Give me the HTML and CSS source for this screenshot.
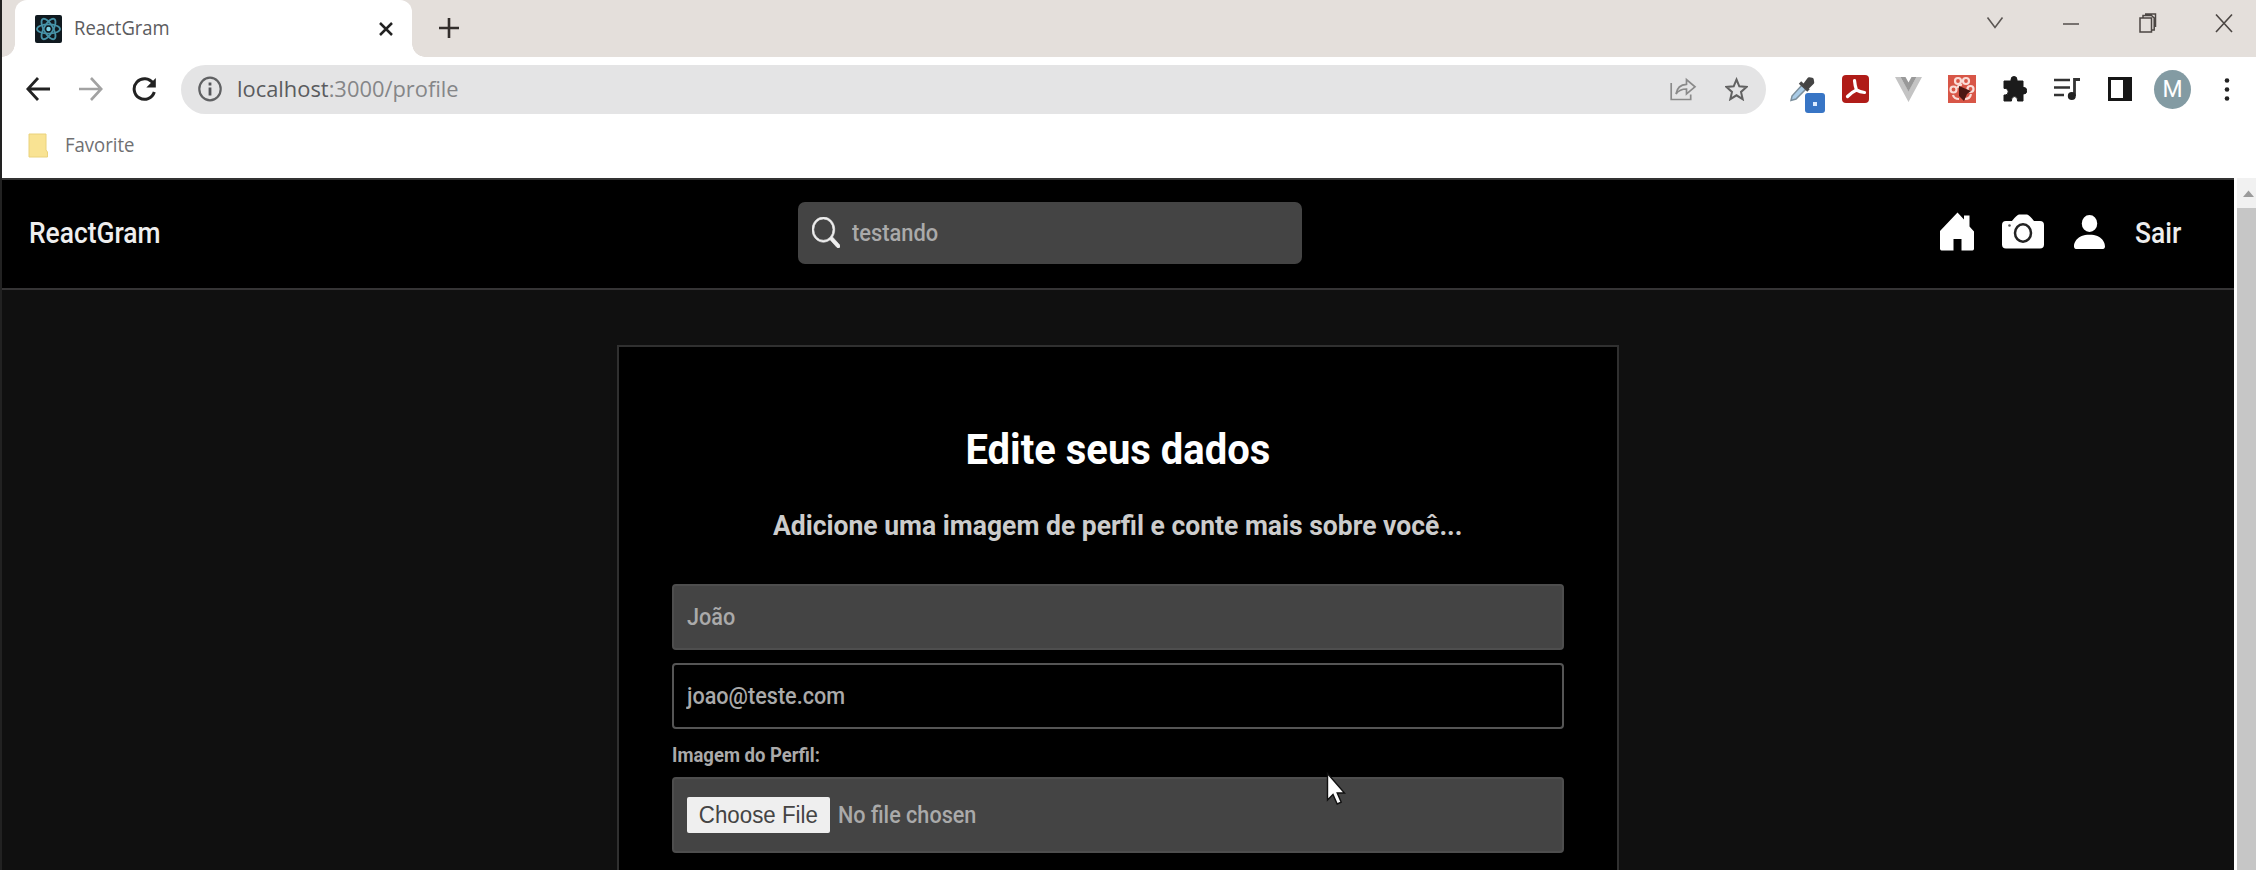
FILE: index.html
```html
<!DOCTYPE html>
<html lang="pt-BR">
<head>
<meta charset="utf-8">
<title>ReactGram</title>
<link rel="stylesheet" href="styles.css">
</head>
<body>
<div class="window">
  <div class="tabstrip">
    <div class="prev-tab"></div>
    <div class="tab">
      <svg class="favicon" width="27" height="28" viewBox="0 0 27 28"><rect width="27" height="28" rx="2" fill="#10191f"/><g fill="none" stroke="#4793a8" stroke-width="1.800"><ellipse cx="13.5" cy="14" rx="11.5" ry="4.6"/><ellipse cx="13.5" cy="14" rx="11.5" ry="4.6" transform="rotate(60 13.5 14)"/><ellipse cx="13.5" cy="14" rx="11.5" ry="4.6" transform="rotate(120 13.5 14)"/></g><circle cx="13.5" cy="14" r="2.2" fill="#7fd3e6"/></svg>
      <span class="tab-title">ReactGram</span>
      <svg class="tab-close" width="14" height="14" viewBox="0 0 14 14"><path d="M1 1l12 12M13 1L1 13" stroke="#222" stroke-width="2.5"/></svg>
    </div>
    <svg class="new-tab" width="20" height="20" viewBox="0 0 20 20"><path d="M10 0v20M0 10h20" stroke="#332e2c" stroke-width="2.6"/></svg>
    <div class="controls">
      <svg width="18" height="20" viewBox="0 0 18 20"><path d="M1.500 4.500l7.500 10 7.500-10" fill="none" stroke="#5b5653" stroke-width="1.6"/></svg>
      <svg width="18" height="20" viewBox="0 0 18 20"><path d="M1 11h16" stroke="#5b5653" stroke-width="1.6"/></svg>
      <svg width="18" height="20" viewBox="0 0 18 20"><path d="M1 5h11.500v14H1zM4 5V2.500h8.500l2.700 2.500v12h-2.700M6 1h10.500v13" fill="none" stroke="#4b4643" stroke-width="1.500"/></svg>
      <svg width="18" height="20" viewBox="0 0 18 20"><path d="M1 1.500l16 17.500M17 1.500L1 19" stroke="#4b4643" stroke-width="1.6"/></svg>
    </div>
  </div>

  <div class="toolbar">
    <div class="navbtns">
      <svg width="24" height="24" viewBox="0 0 24 24"><path d="M24 12H2M12 1L1.800 12 12 23" fill="none" stroke="#222" stroke-width="2.8"/></svg>
      <svg width="24" height="24" viewBox="0 0 24 24"><path d="M0 12h22M12 1l10.200 11L12 23" fill="none" stroke="#a2a2a2" stroke-width="2.6"/></svg>
      <svg width="24" height="24" viewBox="0 0 24 24"><path d="M21 6.200A10.300 10.300 0 1 0 22.300 15" fill="none" stroke="#222" stroke-width="3"/><path d="M23.800 1v9.500h-9.500z" fill="#222"/></svg>
    </div>
    <div class="omnibox">
      <svg width="24" height="26" viewBox="0 0 24 26"><ellipse cx="12" cy="13" rx="10.700" ry="11.400" fill="none" stroke="#606163" stroke-width="2.200"/><path d="M12 11.500v8M12 6.500v3" stroke="#55565a" stroke-width="2.800"/></svg>
      <span class="url">localhost<span class="path">:3000/profile</span></span>
      <div class="omni-actions">
        <svg width="27" height="24" viewBox="0 0 27 24"><path d="M1.200 6v16.500h19.500v-5M6 17C7 10.500 11 7.500 16.500 7.300V2.500l8.500 7.300-8.500 7.200v-5C11.500 12 8.500 13.500 6 17z" fill="none" stroke="#8a8a8a" stroke-width="1.700"/></svg>
        <svg width="23" height="24" viewBox="0 0 23 24"><path d="M11.500 2.500l2.800 6.800 7.200.6-5.500 5 1.700 7.300-6.200-3.900-6.200 3.900L7 14.900 1.500 9.900l7.200-.6z" fill="none" stroke="#626262" stroke-width="2"/></svg>
      </div>
    </div>
    <div class="extensions">
      <span class="picker">
        <svg width="27" height="28" viewBox="0 0 27 28"><path d="M2 25.500l1-4.500L13 10l4 4L7 24z" fill="#a9cbe6" stroke="#7c8f9c" stroke-width="1.500"/><path d="M11 7.500l8.500 8" stroke="#4a4a4a" stroke-width="3.500"/><path d="M15.500 10l4.500-6 3 .5.500 3-5 5z" fill="#444" stroke="#444" stroke-width="3.500" stroke-linejoin="round"/></svg>
        <span class="badge"></span>
      </span>
      <svg width="27" height="28" viewBox="0 0 27 28"><rect width="27" height="28" rx="4" fill="#b01c18"/><path d="M12.500 5.500Q13 11 14.500 15M14.500 15Q18 17 22.500 17.500M14.500 15Q10 17 5.500 21.500" fill="none" stroke="#fff" stroke-width="3.200" stroke-linecap="round"/></svg>
      <svg width="27" height="28" viewBox="0 0 27 28"><path d="M0 2h5.500l8 14 8-14H27L13.500 27z" fill="#c4c4c4"/><path d="M5.500 2h5l3 5.500 3-5.500h5l-8 14.500z" fill="#999"/></svg>
      <svg width="28" height="28" viewBox="0 0 28 28"><rect width="28" height="28" fill="#d85647"/><g fill="none" stroke="#fadcd7" stroke-width="2.200"><circle cx="10" cy="6" r="3"/><circle cx="18" cy="6" r="3"/><circle cx="5.500" cy="14.500" r="3"/><circle cx="22.500" cy="14" r="3"/><path d="M9 13q2-4 5-3M5 20q1 4 6 4M23 19q-1 5-6 5"/></g><path d="M11 11l12 5-4 3-3 7-5-5z" fill="#4b1712"/></svg>
      <svg width="25" height="28" viewBox="0 0 25 28"><path d="M3 6h6V4.800a3 3.300 0 0 1 6 0V6h6v6.500h1a2.700 3.200 0 0 1 0 6.400h-1V26h-5.500v-1a3 3.400 0 0 0-6 0v1H2v-6h1.200a3 3.300 0 0 0 0-6.600H2V6z" fill="#1b1b1b" stroke="#1b1b1b" stroke-linejoin="round"/></svg>
      <svg width="26" height="28" viewBox="0 0 26 28"><path d="M0 5h16M0 12.500h16M0 20h10" stroke="#333" stroke-width="2.500"/><path d="M20.500 21V4.500H26" fill="none" stroke="#333" stroke-width="2.800"/><circle cx="17.800" cy="21" r="4" fill="#222"/></svg>
      <svg width="24" height="28" viewBox="0 0 24 28"><path d="M1.500 3.500h21v21h-21z" fill="none" stroke="#161616" stroke-width="3"/><path d="M15 3h8v22h-8z" fill="#161616"/></svg>
      <span class="avatar">M</span>
      <svg class="kebab" width="6" height="28" viewBox="0 0 6 28"><circle cx="3" cy="5.500" r="2.300" fill="#222"/><circle cx="3" cy="14.500" r="2.300" fill="#222"/><circle cx="3" cy="23.500" r="2.300" fill="#222"/></svg>
    </div>
  </div>

  <div class="bookmarks">
    <svg width="20" height="25" viewBox="0 0 20 25"><path d="M1 1h17v16l1.500 2v5H1z" fill="#f9e393" stroke="#ead27c"/></svg>
    <span class="bookmark">Favorite</span>
  </div>

  <div class="viewport">
    <div class="page">
      <nav class="nav">
        <span class="brand">ReactGram</span>
        <div class="search">
          <svg width="28" height="31" viewBox="0 0 16 16" preserveAspectRatio="none"><path fill="#eee" stroke="#eee" stroke-width=".35" d="M11.742 10.344a6.500 6.500 0 1 0-1.397 1.398h-.001c.03.04.062.078.098.115l3.850 3.850a1 1 0 0 0 1.415-1.414l-3.850-3.850a1.007 1.007 0 0 0-.115-.1zM12 6.500a5.500 5.500 0 1 1-11 0 5.500 5.500 0 0 1 11 0z"/></svg>
          <span class="search-text">testando</span>
        </div>
        <div class="links">
          <svg class="home" width="34" height="39" viewBox="0 0 34 39"><path d="M17.500 .5l6.500 7V3.500h5.500v11l4.500 5v17q0 2-1.500 2H21.500V27h-8v11.500H1.500q-1.500 0-1.500-2V19z" fill="#fff"/></svg>
          <svg class="camera" width="42" height="35" viewBox="0 0 42 35"><path d="M4 7h6q5-6.500 7-6.500h8q2 0 7 6.500h6q4 0 4 4v19.500q0 4-4 4H4q-4 0-4-4V11q0-4 4-4z" fill="#fff"/><ellipse cx="21" cy="19" rx="8" ry="8.700" fill="none" stroke="#222" stroke-width="2.500"/><circle cx="7.500" cy="11.500" r="1.300" fill="#555"/></svg>
          <svg class="person" width="31" height="34" viewBox="2 2 12 12" preserveAspectRatio="none"><path d="M3 14s-1 0-1-1 1-4 6-4 6 3 6 4-1 1-1 1H3zm5-6a3 3 0 1 0 0-6 3 3 0 0 0 0 6z" fill="#fff"/></svg>
          <span class="logout">Sair</span>
        </div>
      </nav>
      <main class="card">
        <h2 class="title"><span>Edite seus dados</span></h2>
        <p class="subtitle"><span>Adicione uma imagem de perfil e conte mais sobre você...</span></p>
        <div class="field filled"><span class="t-name">João</span></div>
        <div class="field"><span class="t-mail">joao@teste.com</span></div>
        <div class="label"><span class="t-label">Imagem do Perfil:</span></div>
        <div class="field filled file"><span class="choose"><span>Choose File</span></span><span class="t-none">No file chosen</span></div>
        <div class="label"><span class="t-bio">Bio:</span></div>
      </main>
    </div>
    <div class="scrollbar">
      <svg width="22" height="30" viewBox="0 0 22 30"><path d="M9 19l5.500-6.500L20 19z" fill="#9b9b9b"/></svg>
      <div class="thumb"></div>
    </div>
  </div>
  <svg class="cursor" width="20" height="34" viewBox="0 0 20 34"><path d="M1.500 1.500v26.500l5.500-5.500 4.200 9.500 4-1.800-4-9.200h7.300z" fill="#fff" stroke="#111" stroke-width="1.400"/></svg>
</div>
</body>
</html>
```

FILE: styles.css
```css
* { box-sizing: border-box; }
body { margin: 0; background: #222; overflow: hidden; font-family: Roboto, "Liberation Sans", sans-serif; }
svg { display: block; flex: none; }
span { white-space: nowrap; }
.window { position: relative; width: 2256px; height: 870px; padding-left: 2px; display: flex; flex-direction: column; background: #222; }

/* browser chrome */
.tabstrip { height: 57px; background: #e4dfdb; display: flex; flex: none; align-items: stretch; }
.prev-tab { width: 13px; }
.tab { width: 397px; background: #fff; border-radius: 12px 12px 0 0; display: flex; align-items: center; padding: 0 19px 0 20px; position: relative; }
.tab::before, .tab::after { content: ""; position: absolute; bottom: 0; width: 13px; height: 13px; }
.tab::before { left: -13px; background: radial-gradient(circle at 0 0, #e4dfdb 12.5px, #fff 13px); }
.tab::after { right: -13px; background: radial-gradient(circle at 100% 0, #e4dfdb 12.5px, #fff 13px); }
.tab-title { margin: -3px 0 0 12px; font: 20.5px/28px "Open Sans", "Noto Sans", sans-serif; color: #5c5c60; transform: scaleX(.9); transform-origin: left; }
.tab-close { margin-left: auto; }
.new-tab { margin: 18px 0 0 27px; }
.controls { display: flex; gap: 58.5px; margin: 13px 23px 0 auto; }
.toolbar { height: 64px; background: #fff; display: flex; flex: none; align-items: center; padding: 0 26px 0 24px; }
.navbtns { display: flex; gap: 29px; width: 155px; }
.omnibox { width: 1585px; height: 49px; border-radius: 25px; background: #e4e4e5; display: flex; align-items: center; padding: 0 18px 0 17px; }
.url { margin-left: 15px; font: 22.5px/30px "Open Sans", "Noto Sans", sans-serif; color: #5a5b5e; transform: scaleX(.972); transform-origin: left; }
.path { color: #858688; }
.omni-actions { margin-left: auto; display: flex; gap: 28px; }
.extensions { margin-left: 23px; flex: 1; display: flex; gap: 26px; align-items: center; }
.picker { position: relative; }
.badge { position: absolute; left: 16px; top: 18px; width: 20px; height: 20px; border-radius: 3px; background: #3875c5; }
.badge::after { content: ""; position: absolute; left: 8px; top: 9px; width: 4px; height: 4px; background: #dcebff; }
.extensions > svg:nth-child(6) { margin-left: 1px; }
.extensions > svg:nth-child(7) { margin-left: 2px; }
.avatar { margin-left: -4px; width: 37px; height: 39px; border-radius: 50%; background: #839ba3; color: #fff; font-size: 23px; line-height: 39px; text-align: center; }
.kebab { margin-left: auto; }
.bookmarks { height: 57px; background: #fff; flex: none; display: flex; align-items: center; padding: 0 0 9px 26px; }
.bookmark { margin-left: 17px; font: 19.5px/28px "Open Sans", "Noto Sans", sans-serif; color: #707072; transform: scaleX(.95); transform-origin: left; }

/* web page */
.viewport { flex: 1; min-height: 0; display: flex; background: #fff; }
.page { width: 2232px; background: #101010; display: flex; flex-direction: column; align-items: center; overflow: hidden; border-top: 2px solid #333; }
.nav { width: 100%; height: 110px; flex: none; background: #000; border-bottom: 2px solid #353435; display: flex; align-items: center; padding: 0 52px 3px 27px; }
.brand, .logout { font-size: 29px; line-height: 34px; font-weight: 500; color: #eee; transform: scaleX(.91); transform-origin: left; }
.brand { width: 769px; }
.search { width: 504px; height: 62px; border-radius: 7px; background: #444; display: flex; align-items: center; padding-left: 14px; }
.search-text { margin-left: 12px; font-size: 24px; color: #aaa; font-weight: 500; transform: scaleX(.91); transform-origin: left; }
.links { margin: -2px 0 0 auto; display: flex; align-items: center; }
.home { margin-right: 28px; }
.camera { margin-right: 30px; }
.person { margin-right: 30px; }
.logout { width: 47px; padding-top: 2px; }
.card { margin-top: 55px; width: 1002px; height: 900px; flex: none; border: 2px solid #303030; background: #000; padding: 70px 53px 0; }
.title { margin: 0; height: 64px; font-size: 43px; line-height: 64px; font-weight: 700; color: #fff; text-align: center; }
.title span, .subtitle span { display: inline-block; transform: scaleX(.93); }
.subtitle { margin: 28px -50px 0; height: 34px; font-size: 28.5px; line-height: 34px; font-weight: 700; color: #ccc; text-align: center; }
.field { height: 66px; border: 2px solid #555; border-radius: 4px; margin-bottom: 13px; display: flex; align-items: center; padding-left: 13px; font-size: 23px; font-weight: 500; color: #aaa; }
.subtitle + .field { margin-top: 41px; }
.field > span { transform-origin: left; }
.filled { background: #444; border-color: #4e4e4e; }
.label { height: 35px; font-size: 20px; line-height: 24px; padding-top: 1px; font-weight: 700; color: #aaa; }
.label span { display: inline-block; transform: scaleX(.925); transform-origin: left; }
.t-name, .t-mail { transform: scaleX(.94); }
.file { height: 76px; }
.choose { width: 143px; height: 36px; background: #efefef; border-radius: 2px; color: #444; font-family: "Liberation Sans", Arial, sans-serif; font-weight: 400; display: flex; align-items: center; justify-content: center; }
.choose span { transform: scaleX(.97); }
.t-none { margin-left: 8px; transform: scaleX(.94); }
.scrollbar { width: 22px; background: #f1f1f1; border-left: 3px solid #fff; display: flex; flex-direction: column; }
.scrollbar svg { margin-left: -3px; }
.thumb { flex: 1; background: #c6c6c6; }
.cursor { position: absolute; left: 1326px; top: 772px; }
```
